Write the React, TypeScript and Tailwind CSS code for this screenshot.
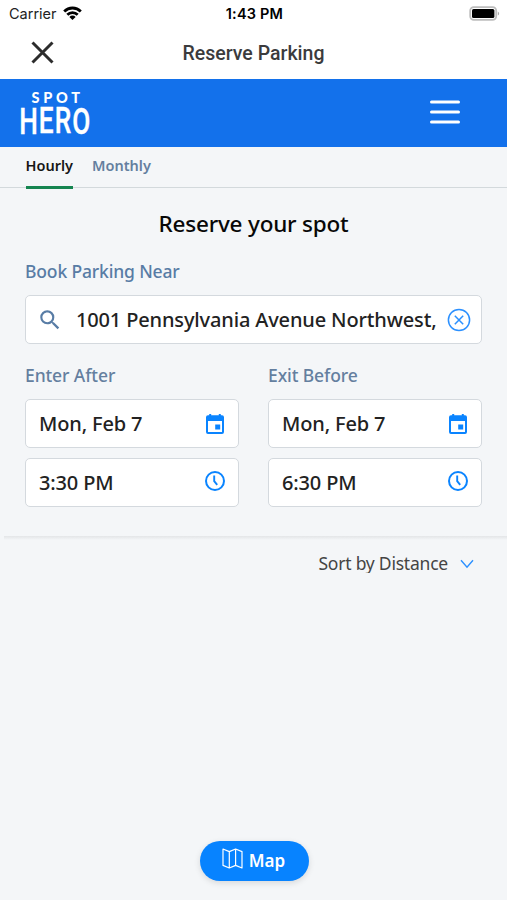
import { useState } from 'react';
import type { ReactNode } from 'react';

interface FieldProps {
  value: string;
  icon: ReactNode;
}

function StatusBar() {
  return (
    <div className="grid grid-cols-3 items-center h-7 pl-[9px] pr-[7px] font-['Inter',sans-serif] text-black">
      <div className="flex items-center gap-[6px]">
        <span className="text-[14.5px] leading-5 text-[#222]">Carrier</span>
        <svg className="w-[19px] h-[14px] -mt-[2px]" viewBox="0 0 19 14" fill="none" stroke="#000" strokeWidth="2.8">
          <path d="M1.2 5.4a11.8 11.8 0 0 1 16.6 0" />
          <path d="M4.3 8.8a7.4 7.4 0 0 1 10.4 0" />
          <path d="M9.5 13.9L6.4 10.9a4.3 4.3 0 0 1 6.2 0z" fill="#000" stroke="none" />
        </svg>
      </div>
      <span className="text-center text-[14.5px] leading-5 tracking-[0.2px] font-semibold whitespace-nowrap">1:43 PM</span>
      <svg className="justify-self-end w-[31px] h-[15px] -mt-[2px]" viewBox="0 0 31 15" fill="none">
        <rect x="1.2" y="1.2" width="26" height="12.6" rx="3.6" stroke="#bdbdbd" strokeWidth="1.8" />
        <rect x="3" y="3" width="22.4" height="9" rx="1.6" fill="#000" />
        <path d="M28.8 5.4c1.8.8 1.8 3.4 0 4.2z" fill="#aaa" />
      </svg>
    </div>
  );
}

function Logo() {
  return (
    <svg className="w-[72px] h-[46px] overflow-visible" viewBox="0 0 72 46" fill="#fff">
      <text x="11.5" y="12.5" textLength="48.5" lengthAdjust="spacing" fontFamily="Lato, sans-serif" fontWeight="900" fontSize="14.5">
        SPOT
      </text>
      <text
        transform="translate(-0.8 44) scale(0.7 1)"
        textLength="101.5"
        lengthAdjust="spacing"
        fontFamily="Roboto, sans-serif"
        fontWeight="500"
        fontSize="37.5"
        stroke="#fff"
        strokeWidth="0.4"
      >
        H<tspan dy="-1.2">ER</tspan><tspan dy="1.2">O</tspan>
      </text>
    </svg>
  );
}

function CalendarIcon() {
  return (
    <svg className="w-[18px] h-5 mr-[3px]" viewBox="0 0 18 20" fill="#0a84ff">
      <path d="M3.2 0h2v1.2h7.6V0h2v1.2H16a2 2 0 0 1 2 2V18a2 2 0 0 1-2 2H2a2 2 0 0 1-2-2V3.2a2 2 0 0 1 2-2h1.2zM2 7v11h14V7zM9.2 10.6h5v5h-5z" fillRule="evenodd" />
    </svg>
  );
}

function ClockIcon() {
  return (
    <svg className="w-6 h-6 -mt-[3px]" viewBox="0 0 24 24" fill="none" stroke="#0a84ff">
      <circle cx="12" cy="12" r="9" strokeWidth="2" />
      <path d="M11.2 6.6v5.6l3 3.7" strokeWidth="1.9" />
    </svg>
  );
}

function Field({ value, icon }: FieldProps) {
  return (
    <button className="flex items-center justify-between w-full h-[49px] pl-[13px] pr-[11px] rounded-[5px] border border-[#d4d9de] bg-white text-left cursor-pointer">
      <span className="text-[20px] leading-6 tracking-[-0.15px] font-medium text-[#222]">{value}</span>
      {icon}
    </button>
  );
}

export default function App() {
  const [tab, setTab] = useState('Hourly');

  return (
    <div className="flex flex-col w-full h-[900px] overflow-hidden bg-[#f4f6f8] font-['Noto_Sans','Open_Sans',sans-serif]">
      <header className="bg-white h-[79px]">
        <StatusBar />
        <div className="grid grid-cols-[1fr_auto_1fr] items-center h-[50px] px-[31px]">
          <svg className="w-[23px] h-[23px] -mt-[2px]" viewBox="0 0 23 23" stroke="#2c2c2c" strokeWidth="3">
            <path d="M1.5 1.5l20 20M21.5 1.5l-20 20" />
          </svg>
          <h1 className="pt-px font-['Roboto',sans-serif] text-[19.5px] leading-6 font-medium text-[#3b3b3d]">Reserve Parking</h1>
        </div>
      </header>

      <div className="flex items-center justify-between h-[68px] pl-5 pr-[47px] bg-[#1371eb]">
        <Logo />
        <svg className="w-[30px] h-6 -mt-[3px]" viewBox="0 0 30 24" stroke="#fff" strokeWidth="3" strokeLinecap="round">
          <path d="M1.5 2h27M1.5 12h27M1.5 22h27" />
        </svg>
      </div>

      <nav className="flex gap-[19px] h-[41px] pl-[25.5px] border-b border-[#d3d9dc]">
        {['Hourly', 'Monthly'].map(name => (
          <button
            key={name}
            onClick={() => setTab(name)}
            className={`h-[42px] pb-[4px] text-[14.5px] leading-5 font-semibold cursor-pointer border-b-[3px] ${
              tab === name ? 'text-[#161616] border-[#158550]' : 'text-[#647f9f] border-transparent'
            }`}
          >
            {name}
          </button>
        ))}
      </nav>

      {/* Search form */}
      <section className="h-[348px] px-[25px]">
        <h2 className="pt-5 text-center text-[22.5px] leading-8 tracking-[-0.2px] font-medium text-[#080808]">Reserve your spot</h2>
        <p className="mt-[19px] text-[17.5px] leading-6 tracking-[-0.15px] font-medium text-[#587ca5]">Book Parking Near</p>
        <div className="flex items-center h-[49px] mt-3 pl-[11px] pr-[10px] rounded-[5px] border border-[#d4d9de] bg-white">
          <svg className="w-[26px] h-[26px]" viewBox="0 0 24 24" fill="#587ca5">
            <path d="M15.5 14h-.79l-.28-.27A6.471 6.471 0 0 0 16 9.5 6.5 6.5 0 1 0 9.5 16c1.61 0 3.09-.59 4.23-1.57l.27.28v.79l5 4.99L20.49 19l-4.99-5zm-6 0C7.01 14 5 11.99 5 9.5S7.01 5 9.5 5 14 7.01 14 9.5 11.99 14 9.5 14z" />
          </svg>
          <span className="flex-1 ml-[13px] text-[20px] leading-6 tracking-[-0.15px] font-medium text-[#222] whitespace-nowrap">1001 Pennsylvania Avenue Northwest,</span>
          <svg className="w-6 h-6 shrink-0" viewBox="0 0 24 24" fill="none" stroke="#2b90ff" strokeWidth="1.5">
            <circle cx="12" cy="12" r="10.6" />
            <path d="M7.8 7.8l8.4 8.4M16.2 7.8l-8.4 8.4" />
          </svg>
        </div>

        <div className="grid grid-cols-2 gap-x-[29px] mt-[19px]">
          <div>
            <p className="mb-3 text-[17.5px] leading-6 tracking-[-0.1px] font-medium text-[#647f9f]">Enter After</p>
            <div className="flex flex-col gap-[10px]">
              <Field value="Mon, Feb 7" icon={<CalendarIcon />} />
              <Field value="3:30 PM" icon={<ClockIcon />} />
            </div>
          </div>
          <div>
            <p className="mb-3 text-[17.5px] leading-6 tracking-[-0.1px] font-medium text-[#647f9f]">Exit Before</p>
            <div className="flex flex-col gap-[10px]">
              <Field value="Mon, Feb 7" icon={<CalendarIcon />} />
              <Field value="6:30 PM" icon={<ClockIcon />} />
            </div>
          </div>
        </div>
      </section>
      <div className="h-1 ml-1 bg-linear-to-b from-[#e3e5e7] to-[#f4f6f8]" />

      <div className="flex items-start justify-end pt-[11px] pr-[33px]">
        <span className="h-[22px] overflow-hidden text-[17.5px] leading-6 tracking-[-0.22px] text-[#444]">Sort by Distance</span>
        <svg className="w-[14px] h-[10px] ml-3 mt-2" viewBox="0 0 14 10" fill="none" stroke="#2b90ff" strokeWidth="1.4">
          <path d="M1 1.2l6 7 6-7" />
        </svg>
      </div>

      <button className="flex items-center justify-center gap-[6px] w-[109px] h-10 mt-auto mb-[19px] ml-[199.5px] pr-px rounded-full bg-[#0783ff] text-white shadow-[0_2px_6px_rgba(0,0,0,0.12)] cursor-pointer">
        <svg className="w-[21px] h-[21px] -mt-[6px]" viewBox="0 0 21 21" fill="none" stroke="#fff" strokeWidth="1.2" strokeLinejoin="round">
          <path d="M1 1l6.3 2.6L13.6 1 20 3.6V20l-6.4-2.6L7.3 20 1 17.4zM7.3 3.6V20M13.6 1v16.4" />
        </svg>
        <span className="text-[17px] leading-6 font-semibold">Map</span>
      </button>
    </div>
  );
}
